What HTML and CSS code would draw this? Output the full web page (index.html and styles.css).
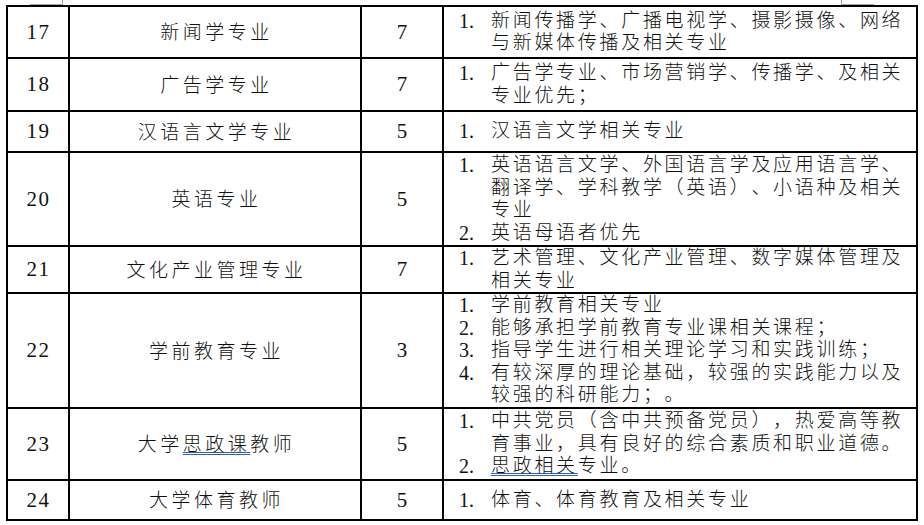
FILE: index.html
```html
<!DOCTYPE html>
<html lang="zh-CN">
<head>
<meta charset="utf-8">
<title>岗位需求表</title>
<link rel="stylesheet" href="styles.css">
</head>
<body>
<div class="crop crop-left"></div>
<div class="crop crop-right"></div>
<div class="sheet">
  <div class="row h52">
    <div class="c no">17</div>
    <div class="c name">新闻学专业</div>
    <div class="c cnt">7</div>
    <div class="c req">
      <div class="item"><span class="n">1.</span><span class="t">新闻传播学、广播电视学、摄影摄像、网络<br>与新媒体传播及相关专业</span></div>
    </div>
  </div>
  <div class="row h53">
    <div class="c no">18</div>
    <div class="c name">广告学专业</div>
    <div class="c cnt">7</div>
    <div class="c req">
      <div class="item"><span class="n">1.</span><span class="t">广告学专业、市场营销学、传播学、及相关<br>专业优先；</span></div>
    </div>
  </div>
  <div class="row h41">
    <div class="c no">19</div>
    <div class="c name">汉语言文学专业</div>
    <div class="c cnt">5</div>
    <div class="c req">
      <div class="item"><span class="n">1.</span><span class="t">汉语言文学相关专业</span></div>
    </div>
  </div>
  <div class="row h94">
    <div class="c no">20</div>
    <div class="c name">英语专业</div>
    <div class="c cnt">5</div>
    <div class="c req">
      <div class="item"><span class="n">1.</span><span class="t">英语语言文学、外国语言学及应用语言学、<br>翻译学、学科教学（英语）、小语种及相关<br>专业</span></div>
      <div class="item"><span class="n">2.</span><span class="t">英语母语者优先</span></div>
    </div>
  </div>
  <div class="row h47">
    <div class="c no">21</div>
    <div class="c name">文化产业管理专业</div>
    <div class="c cnt">7</div>
    <div class="c req">
      <div class="item"><span class="n">1.</span><span class="t">艺术管理、文化产业管理、数字媒体管理及<br>相关专业</span></div>
    </div>
  </div>
  <div class="row h115">
    <div class="c no">22</div>
    <div class="c name">学前教育专业</div>
    <div class="c cnt">3</div>
    <div class="c req">
      <div class="item"><span class="n">1.</span><span class="t">学前教育相关专业</span></div>
      <div class="item"><span class="n">2.</span><span class="t">能够承担学前教育专业课相关课程；</span></div>
      <div class="item"><span class="n">3.</span><span class="t">指导学生进行相关理论学习和实践训练；</span></div>
      <div class="item"><span class="n">4.</span><span class="t">有较深厚的理论基础，较强的实践能力以及<br>较强的科研能力；。</span></div>
    </div>
  </div>
  <div class="row h72">
    <div class="c no">23</div>
    <div class="c name">大学<span class="mark">思政课</span>教师</div>
    <div class="c cnt">5</div>
    <div class="c req">
      <div class="item"><span class="n">1.</span><span class="t">中共党员（含中共预备党员），热爱高等教<br>育事业，具有良好的综合素质和职业道德。</span></div>
      <div class="item"><span class="n">2.</span><span class="t"><span class="mark">思政相关</span>专业。</span></div>
    </div>
  </div>
  <div class="row h40">
    <div class="c no">24</div>
    <div class="c name">大学体育教师</div>
    <div class="c cnt">5</div>
    <div class="c req">
      <div class="item"><span class="n">1.</span><span class="t">体育、体育教育及相关专业</span></div>
    </div>
  </div>
</div>
</body>
</html>
```

FILE: styles.css
```css
html, body {
  margin: 0;
  padding: 0;
  background: #ffffff;
}

body {
  padding: 5px 0 0 6px;
  font-family: "Liberation Serif", "Noto Sans CJK SC", serif;
  color: #111111;
  position: relative;
  text-spacing-trim: space-all;
}

.crop {
  position: absolute;
  top: 0;
  width: 32px;
  height: 4px;
  border-bottom: 1px solid #a0a0a0;
}

.crop-left {
  left: 30px;
  border-right: 1px solid #a0a0a0;
}

.crop-right {
  left: 841px;
  border-left: 1px solid #a0a0a0;
}

.sheet {
  width: 912px;
  border-top: 2px solid #000;
  border-left: 2px solid #000;
  box-sizing: border-box;
}

.row {
  display: grid;
  grid-template-columns: 62px 292px 82px 474px;
}

.h52 { height: 52px; }
.h53 { height: 53px; }
.h41 { height: 41px; }
.h94 { height: 94px; }
.h47 { height: 47px; }
.h115 { height: 115px; }
.h72 { height: 72px; }
.h40 { height: 40px; }

.c {
  border-right: 2px solid #000;
  border-bottom: 2px solid #000;
  box-sizing: border-box;
  display: flex;
  align-items: center;
  min-width: 0;
}

.no {
  justify-content: center;
  font-size: 21px;
  letter-spacing: 1.5px;
  padding-left: 1px;
}

.name {
  justify-content: center;
  font-size: 19px;
  font-weight: 300;
  letter-spacing: 3.5px;
  padding-left: 3px;
  padding-bottom: 3px;
}

.cnt {
  justify-content: center;
  font-size: 21px;
}

.req {
  flex-direction: column;
  align-items: stretch;
  justify-content: center;
  padding: 0 2px 0 15px;
  font-size: 19px;
  font-weight: 300;
  line-height: 22.5px;
  letter-spacing: 2.7px;
}

.item {
  display: flex;
  align-items: flex-start;
}

.n {
  flex: 0 0 32px;
  font-size: 20px;
  font-weight: 400;
  letter-spacing: 0;
}

.t {
  flex: 1 1 auto;
  white-space: nowrap;
}

.mark {
  text-decoration: underline double #2f5bd0;
  text-decoration-thickness: 1px;
  text-underline-offset: 1px;
}
```
